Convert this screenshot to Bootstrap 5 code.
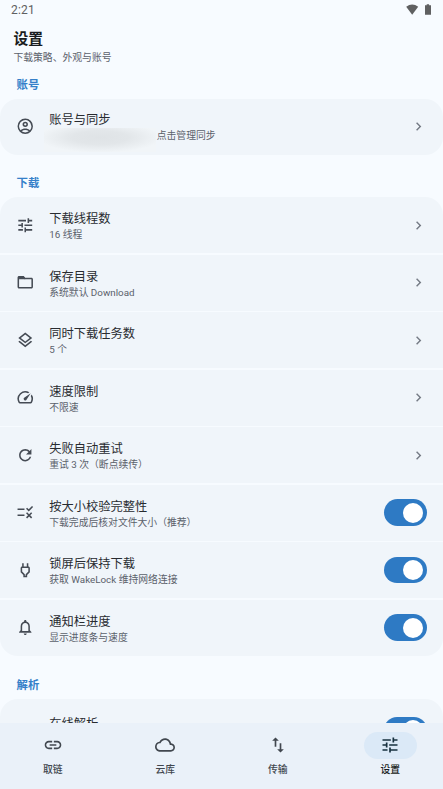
<!DOCTYPE html>
<html lang="zh-CN">
<head>
<meta charset="utf-8">
<meta name="viewport" content="width=device-width, initial-scale=1">
<title>设置</title>
<link href="https://cdn.jsdelivr.net/npm/bootstrap@5.3.0/dist/css/bootstrap.min.css" rel="stylesheet">
<style>
html,body{height:100%;overflow:hidden}
body{background:#f7fbff;color:#191c20;font-family:Roboto,"Noto Sans CJK SC",sans-serif}
svg{display:block;fill:currentColor;flex:none}
.status{height:20px;padding:0 11px;color:#5f6061;font-size:12px;letter-spacing:.2px}
.page-head{height:53px;padding:9px 13.4px 0}
.page-head h1{font-size:14.8px;line-height:20px;font-weight:700;margin:0}
.sub-text{font-size:9.82px;line-height:14px;color:#5b616b;white-space:nowrap}
.page-head .sub-text{margin-top:2px}
.section-title{font-size:11.4px;line-height:16px;font-weight:700;color:#3580c9;padding-left:16.5px;margin:20.7px 0 6px}
.section-title.first{margin:4px 0 5.5px}
.group+.section-title.last{margin-top:21.2px}
.group{display:flex;flex-direction:column;gap:1.5px;border-radius:18px;overflow:hidden}
.setting{height:56px;background:#f0f5fa;padding:0 16px;color:#454b54}
.setting.tall{height:62.5px}
.setting>svg:first-child{width:18.5px;height:18.5px}
.setting .texts{margin-left:14.7px;padding-top:2.8px}
.group.single .texts{padding-top:2px}
.item-title{font-size:12.25px;line-height:17px;color:#282b30;white-space:nowrap}
.group.single .sub-text{padding-top:.5px}
.chev{width:17px;height:17px;color:#757b85}
.masked{width:112px;height:24px;margin:-1px 0 -9px -5px;background:radial-gradient(ellipse 62px 15px at 50% 40%,#dfe3e6,#e2e6e9 45%,#f1f5f8 100%)}
.masked+span{margin-left:.5px}
.switch{width:43px;height:26.6px;border-radius:14px;background:#2e7ac4;padding-right:3.8px}
.knob{width:20px;height:20px;border-radius:50%;background:#fff}
.tabs{height:66px;background:#eaf1f9;padding-top:9px;margin:0 -3.5px}
.tab{flex:1 1 0;color:#41474f;font-size:9.8px;line-height:14px;font-weight:500}
.tab .lbl{margin-top:4px}
.pill{width:53px;height:26.5px;border-radius:14px}
.pill svg{width:20px;height:20px}
.tab.on{color:#171b20}
.tab.on .pill{background:#dbe9f7;color:#17303f}
</style>
<script src="https://cdn.jsdelivr.net/npm/bootstrap@5.3.0/dist/js/bootstrap.bundle.min.js"></script>
</head>
<body>
<svg class="d-none">
<symbol id="tune" viewBox="0 0 24 24"><path d="M3 17v2h6v-2H3zM3 5v2h10V5H3zm10 16v-2h8v-2h-8v-2h-2v6h2zM7 9v2H3v2h4v2h2V9H7zm14 4v-2H11v2h10zm-6-4h2V7h4V5h-4V3h-2v6z"/></symbol>
<symbol id="chevron" viewBox="0 0 24 24"><path d="M10 6L8.59 7.41 13.17 12l-4.58 4.59L10 18l6-6z"/></symbol>
</svg>
<header>
<div class="status d-flex align-items-center justify-content-between"><span>2:21</span>
<span class="d-flex align-items-center gap-1"><svg width="14" height="13" viewBox="0 0 14 13"><path d="M1.2 2.8Q7.2-1.6 13.2 2.8L7.2 10.8z"/></svg><svg width="9" height="13" viewBox="0 0 9 13"><path d="M2 1.3h1.7V.3h2.4v1H8v9.4H2z"/></svg></span></div>
<div class="page-head"><h1>设置</h1><div class="sub-text">下载策略、外观与账号</div></div>
</header>
<main>
<h2 class="section-title first">账号</h2>
<div class="group single">
<div class="setting d-flex align-items-center"><svg viewBox="0 0 24 24"><path d="M12 2a10 10 0 1 0 0 20 10 10 0 0 0 0-20zM7.35 18.5C8.66 17.56 10.26 17 12 17s3.34.56 4.65 1.5C15.34 19.44 13.74 20 12 20s-3.34-.56-4.65-1.5zm10.79-1.38C16.45 15.8 14.32 15 12 15s-4.45.8-6.14 2.12A8 8 0 1 1 20 12c0 1.95-.7 3.73-1.86 5.12zM12 6a3.5 3.5 0 1 0 0 7 3.5 3.5 0 0 0 0-7zm0 5a1.5 1.5 0 1 1 0-3 1.5 1.5 0 0 1 0 3z"/></svg><div class="texts flex-grow-1"><div class="item-title">账号与同步</div><div class="sub-text d-flex"><span class="masked"></span><span>点击管理同步</span></div></div><svg class="chev"><use href="#chevron"/></svg></div>
</div>
<h2 class="section-title">下载</h2>
<div class="group">
<div class="setting d-flex align-items-center"><svg viewBox="0 0 24 24"><use href="#tune"/></svg><div class="texts flex-grow-1"><div class="item-title">下载线程数</div><div class="sub-text">16 线程</div></div><svg class="chev"><use href="#chevron"/></svg></div>
<div class="setting d-flex align-items-center"><svg viewBox="0 0 24 24"><path d="M9.17 6l2 2H20v10H4V6h5.17M10 4H4c-1.1 0-1.99.9-1.99 2L2 18c0 1.1.9 2 2 2h16c1.1 0 2-.9 2-2V8c0-1.1-.9-2-2-2h-8l-2-2z"/><path d="M4 5h6l2 3H4z"/></svg><div class="texts flex-grow-1"><div class="item-title">保存目录</div><div class="sub-text">系统默认 Download</div></div><svg class="chev"><use href="#chevron"/></svg></div>
<div class="setting d-flex align-items-center"><svg viewBox="0 0 24 24"><path d="M11.99 18.54l-7.37-5.73L3 14.07l9 7 9-7-1.63-1.27zM12 16l7.36-5.73L21 9l-9-7-9 7 1.63 1.27L12 16zm0-11.47L17.74 9 12 13.47 6.26 9 12 4.53z"/></svg><div class="texts flex-grow-1"><div class="item-title">同时下载任务数</div><div class="sub-text">5 个</div></div><svg class="chev"><use href="#chevron"/></svg></div>
<div class="setting d-flex align-items-center"><svg viewBox="0 0 24 24"><path d="M20.38 8.57l-1.23 1.85a8 8 0 0 1-.22 7.58H5.07A8 8 0 0 1 15.58 6.85l1.85-1.23A10 10 0 0 0 3.35 19a2 2 0 0 0 1.72 1h13.85a2 2 0 0 0 1.74-1 10 10 0 0 0-.27-10.44zm-9.79 6.84a2 2 0 0 0 2.83 0l5.66-8.49-8.49 5.66a2 2 0 0 0 0 2.83z"/></svg><div class="texts flex-grow-1"><div class="item-title">速度限制</div><div class="sub-text">不限速</div></div><svg class="chev"><use href="#chevron"/></svg></div>
<div class="setting d-flex align-items-center"><svg viewBox="0 0 24 24"><path d="M17.65 6.35C16.2 4.9 14.21 4 12 4c-4.42 0-7.99 3.58-7.99 8s3.57 8 7.99 8c3.73 0 6.84-2.55 7.73-6h-2.08c-.82 2.33-3.04 4-5.65 4-3.31 0-6-2.69-6-6s2.69-6 6-6c1.66 0 3.14.69 4.22 1.78L13 11h7V4l-2.35 2.35z"/></svg><div class="texts flex-grow-1"><div class="item-title">失败自动重试</div><div class="sub-text">重试 3 次（断点续传）</div></div><svg class="chev"><use href="#chevron"/></svg></div>
<div class="setting d-flex align-items-center"><svg viewBox="0 0 24 24"><path d="M16.54 11L13 7.46l1.41-1.41 2.12 2.12 4.24-4.24 1.41 1.41L16.54 11zM11 7H2v2h9V7zM21 13.41L19.59 12 17 14.59 14.41 12 13 13.41 15.59 16 13 18.59 14.41 20 17 17.41 19.59 20 21 18.59 18.41 16 21 13.41zM11 15H2v2h9v-2z"/></svg><div class="texts flex-grow-1"><div class="item-title">按大小校验完整性</div><div class="sub-text">下载完成后核对文件大小（推荐）</div></div><span class="switch d-flex align-items-center justify-content-end"><span class="knob"></span></span></div>
<div class="setting d-flex align-items-center"><svg viewBox="0 0 24 24"><path d="M16 9v4.66l-3.5 3.51V19h-1v-1.83L8 13.65V9h8m0-6h-2v4h-4V3H8v4h-.01C6.9 6.99 6 7.89 6 8.98v5.52L9.5 18v3h5v-3l3.5-3.51V9c0-1.1-.9-2-2-2V3z"/></svg><div class="texts flex-grow-1"><div class="item-title">锁屏后保持下载</div><div class="sub-text">获取 WakeLock 维持网络连接</div></div><span class="switch d-flex align-items-center justify-content-end"><span class="knob"></span></span></div>
<div class="setting d-flex align-items-center"><svg viewBox="0 0 24 24"><path d="M12 22c1.1 0 2-.9 2-2h-4c0 1.1.9 2 2 2zm6-6v-5c0-3.07-1.63-5.64-4.5-6.32V4c0-.83-.67-1.5-1.5-1.5s-1.5.67-1.5 1.5v.68C7.64 5.36 6 7.92 6 11v5l-2 2v1h16v-1l-2-2zm-2 1H8v-6c0-2.48 1.51-4.5 4-4.5s4 2.02 4 4.5v6z"/></svg><div class="texts flex-grow-1"><div class="item-title">通知栏进度</div><div class="sub-text">显示进度条与速度</div></div><span class="switch d-flex align-items-center justify-content-end"><span class="knob"></span></span></div>
</div>
<h2 class="section-title last">解析</h2>
<div class="group">
<div class="setting tall d-flex align-items-center"><svg viewBox="0 0 24 24"></svg><div class="texts flex-grow-1"><div class="item-title">在线解析</div><div class="sub-text">&nbsp;</div></div><span class="switch d-flex align-items-center justify-content-end"><span class="knob"></span></span></div>
</div>
</main>
<nav class="tabs fixed-bottom d-flex align-items-start">
<div class="tab d-flex flex-column align-items-center"><span class="pill d-flex align-items-center justify-content-center"><svg viewBox="0 0 24 24"><path d="M3.9 12c0-1.71 1.39-3.1 3.1-3.1h4V7H7c-2.76 0-5 2.24-5 5s2.24 5 5 5h4v-1.9H7c-1.71 0-3.1-1.39-3.1-3.1zM8 13h8v-2H8v2zm9-6h-4v1.9h4c1.71 0 3.1 1.39 3.1 3.1s-1.39 3.1-3.1 3.1h-4V17h4c2.76 0 5-2.24 5-5s-2.24-5-5-5z"/></svg></span><span class="lbl">取链</span></div>
<div class="tab d-flex flex-column align-items-center"><span class="pill d-flex align-items-center justify-content-center"><svg viewBox="0 0 24 24"><path d="M19.35 10.04C18.67 6.59 15.64 4 12 4 9.11 4 6.6 5.64 5.35 8.04 2.34 8.36 0 10.91 0 14c0 3.31 2.69 6 6 6h13c2.76 0 5-2.24 5-5 0-2.64-2.05-4.78-4.65-4.96zM19 18H6c-2.21 0-4-1.79-4-4 0-2.05 1.53-3.76 3.56-3.97l1.07-.11.5-.95C8.08 7.14 9.94 6 12 6c2.62 0 4.88 1.86 5.39 4.43l.3 1.5 1.53.11c1.56.1 2.78 1.41 2.78 2.96 0 1.65-1.35 3-3 3z"/></svg></span><span class="lbl">云库</span></div>
<div class="tab d-flex flex-column align-items-center"><span class="pill d-flex align-items-center justify-content-center"><svg viewBox="0 0 24 24"><path d="M9 3L5 6.99h3V14h2V6.99h3L9 3zm7 14.01V10h-2v7.01h-3L15 21l4-3.99h-3z"/></svg></span><span class="lbl">传输</span></div>
<div class="tab on d-flex flex-column align-items-center"><span class="pill d-flex align-items-center justify-content-center"><svg viewBox="0 0 24 24"><use href="#tune"/></svg></span><span class="lbl">设置</span></div>
</nav>
</body>
</html>
